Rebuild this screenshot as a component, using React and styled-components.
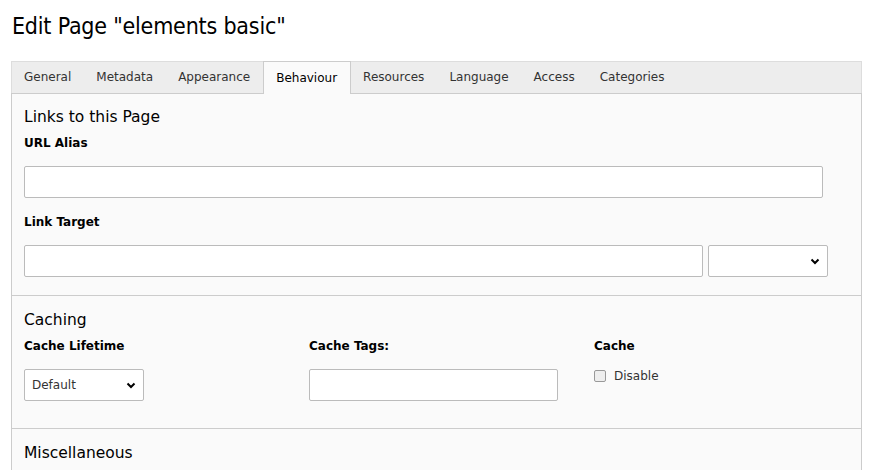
import React from "react";
import styled, { createGlobalStyle } from "styled-components";

const G = createGlobalStyle`
  body { margin: 0; background: #fff; font-family: "DejaVu Sans", Verdana, sans-serif; color: #000; }
`;
const Page = styled.div` padding: 9px 9px 0 11px; width: 851px; `;
const Title = styled.h1`
  margin: 0 0 18px 1px; font-family: "DejaVu Sans Condensed", "DejaVu Sans", sans-serif;
  font-weight: normal; font-size: 23px; line-height: 34px; letter-spacing: -0.2px;
`;
const Tabs = styled.div`
  display: flex; background: #ededed; border: 1px solid #ddd; border-bottom: none; height: 31px;
`;
const Tab = styled.div`
  padding: 0 13px 0 12px; font-size: 12px; line-height: 31px; color: #333;
  ${p => p.$active && `background:#fafafa;border:1px solid #ccc;border-bottom:none;height:32px;margin-top:-1px;line-height:32px;color:#000;`}
`;
const Panel = styled.div` background: #fafafa; border: 1px solid #ccc; `;
const Section = styled.div`
  padding: ${p => (p.$first ? "13px 12px 18px" : "14px 12px 27px")};
  border-top: ${p => (p.$first ? "none" : "1px solid #ccc")};
`;
const H = styled.div` font-size: 15.5px; line-height: 20px; margin-bottom: 8px; `;
const Label = styled.div` font-size: 12px; font-weight: bold; line-height: 16px; margin-bottom: 15px; `;
const Input = styled.div`
  width: ${p => p.$w}px; background: #fff; border: 1px solid #bbb; border-radius: 2px;
  box-sizing: border-box; height: 32px;
`;
const Row = styled.div` display: flex; gap: 5px; margin-bottom: ${p => p.$mb || 0}px; `;
const Select = styled.div`
  width: ${p => p.$w}px; height: 32px; box-sizing: border-box; background: #fff; border: 1px solid #bbb;
  border-radius: 2px; display: flex; align-items: center; justify-content: space-between; padding: 0 7px;
  font-size: 12px; color: #333;
`;
const Cols = styled.div` display: grid; grid-template-columns: 285px 285px 1fr; `;
const Check = styled.label` display: flex; align-items: center; gap: 8px; font-size: 12px; color: #333; margin-top: 4px; `;
const Box = styled.span` width: 10px; height: 10px; border: 1px solid #999; border-radius: 2px; background: #eee; `;

const Chev = () => (
  <svg width="10" height="7" viewBox="0 0 10 7"><path d="M1.5 1.5 L5 5 L8.5 1.5" stroke="#000" strokeWidth="2" fill="none" /></svg>
);

export default function App() {
  const tabs = ["General", "Metadata", "Appearance", "Behaviour", "Resources", "Language", "Access", "Categories"];
  return (
    <Page>
      <G />
      <Title>Edit Page "elements basic"</Title>
      <Tabs>{tabs.map(t => <Tab key={t} $active={t === "Behaviour"}>{t}</Tab>)}</Tabs>
      <Panel>
        <Section $first>
          <H>Links to this Page</H>
          <Label>URL Alias</Label>
          <Row $mb={16}><Input $w={799} /></Row>
          <Label>Link Target</Label>
          <Row><Input $w={679} /><Select $w={120}><span /><Chev /></Select></Row>
        </Section>
        <Section>
          <H>Caching</H>
          <Cols>
            <div><Label>Cache Lifetime</Label><Select $w={120}>Default<Chev /></Select></div>
            <div><Label>Cache Tags:</Label><Input $w={249} /></div>
            <div><Label>Cache</Label><Check><Box />Disable</Check></div>
          </Cols>
        </Section>
        <Section><H>Miscellaneous</H></Section>
      </Panel>
    </Page>
  );
}
